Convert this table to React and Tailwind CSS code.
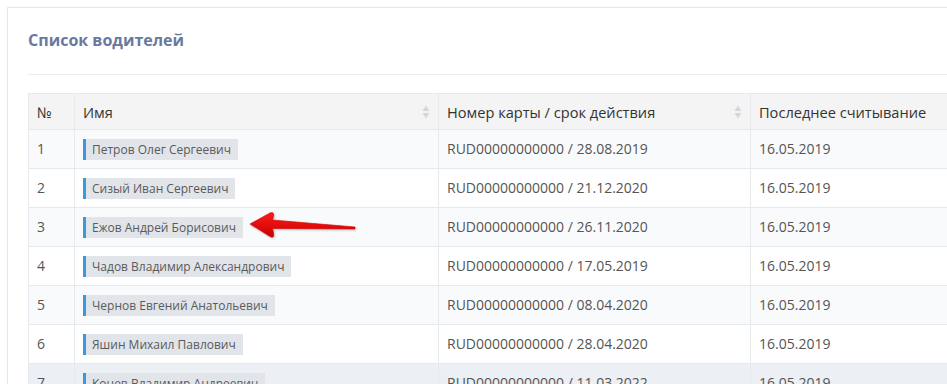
import React from 'react';

const drivers = [
  { n: 1, name: 'Петров Олег Сергеевич', card: 'RUD00000000000 / 28.08.2019', read: '16.05.2019' },
  { n: 2, name: 'Сизый Иван Сергеевич', card: 'RUD00000000000 / 21.12.2020', read: '16.05.2019' },
  { n: 3, name: 'Ежов Андрей Борисович', card: 'RUD00000000000 / 26.11.2020', read: '16.05.2019' },
  { n: 4, name: 'Чадов Владимир Александрович', card: 'RUD00000000000 / 17.05.2019', read: '16.05.2019' },
  { n: 5, name: 'Чернов Евгений Анатольевич', card: 'RUD00000000000 / 08.04.2020', read: '16.05.2019' },
  { n: 6, name: 'Яшин Михаил Павлович', card: 'RUD00000000000 / 28.04.2020', read: '16.05.2019' },
  { n: 7, name: 'Конев Владимир Андреевич', card: 'RUD00000000000 / 11.03.2022', read: '16.05.2019' },
  { n: 8, name: 'Орлов Сергей Петрович', card: 'RUD00000000000 / 02.09.2021', read: '16.05.2019' },
];

function SortIcon() {
  return (
    <svg className="w-[8px] h-[14px] text-[#d3d6da]" viewBox="0 0 8 14" fill="currentColor">
      <path d="M4 0.5L7.5 6H0.5z" />
      <path d="M4 13.5L7.5 8H0.5z" />
    </svg>
  );
}

function RedArrow() {
  return (
    <svg className="absolute left-[246px] top-[208px] w-[114px] h-[36px] drop-shadow-[1px_1px_1px_rgba(0,0,0,0.25)]" viewBox="0 0 114 36">
      <defs>
        <linearGradient id="arrowFill" x1="0" y1="0" x2="0" y2="1">
          <stop offset="0" stopColor="#ff1a1a" />
          <stop offset="1" stopColor="#c80000" />
        </linearGradient>
      </defs>
      <path
        d="M4 16 L24 5 Q28 3 27.5 8 L26.5 12 L109 19 L109 21 L26.5 20.5 L27.5 25 Q28.5 31 24 28.5 Z"
        fill="url(#arrowFill)"
        stroke="#d00000"
        strokeWidth="0.6"
        strokeLinejoin="round"
      />
    </svg>
  );
}

export default function App() {
  return (
    <div className="relative w-[947px] h-[384px] overflow-hidden bg-white font-['Open_Sans',sans-serif] pt-[7px] pl-[7px]">
      <div className="w-[1100px] border border-[#e7e7e7] bg-white pl-[20px] pt-[21px] pb-10">
        <h2 className="text-[16px] leading-[22px] font-bold text-[#6879a0]">Список водителей</h2>
        <div className="mt-[23px] border-t border-[#ececec]" />
        <table className="mt-[18px] border-collapse text-[14px] leading-[20px] text-[#555]">
          <thead>
            <tr className="bg-[#f4f4f4] h-[36px] text-[#333] text-[14.6px]">
              <th className="w-[46px] border border-[#e6e9ed] px-2 text-left font-normal">№</th>
              <th className="w-[364px] border border-[#e6e9ed] px-2 text-left font-normal">
                <div className="flex items-center justify-between">
                  <span>Имя</span>
                  <SortIcon />
                </div>
              </th>
              <th className="w-[312px] border border-[#e6e9ed] px-2 text-left font-normal">
                <div className="flex items-center justify-between">
                  <span>Номер карты / срок действия</span>
                  <SortIcon />
                </div>
              </th>
              <th className="w-[280px] border border-[#e6e9ed] px-2 text-left font-normal">Последнее считывание</th>
            </tr>
          </thead>
          <tbody>
            {drivers.map((d) => (
              <tr
                key={d.n}
                className={`h-[39px] ${d.n === 7 ? 'bg-[#eceff3]' : d.n % 2 === 1 ? 'bg-[#f9fafc]' : 'bg-white'}`}
              >
                <td className="border border-[#e6e9ed] px-2">{d.n}</td>
                <td className="border border-[#e6e9ed] px-2">
                  <div className="flex">
                    <span className="h-[21px] leading-[21px] border-l-[3px] border-[#3a98db] bg-[#e1e5ea] pl-[6px] pr-[7px] text-[12px] text-[#5a5a5a]">
                      {d.name}
                    </span>
                  </div>
                </td>
                <td className="border border-[#e6e9ed] px-2">{d.card}</td>
                <td className="border border-[#e6e9ed] px-2">{d.read}</td>
              </tr>
            ))}
          </tbody>
        </table>
      </div>
      <RedArrow />
    </div>
  );
}
